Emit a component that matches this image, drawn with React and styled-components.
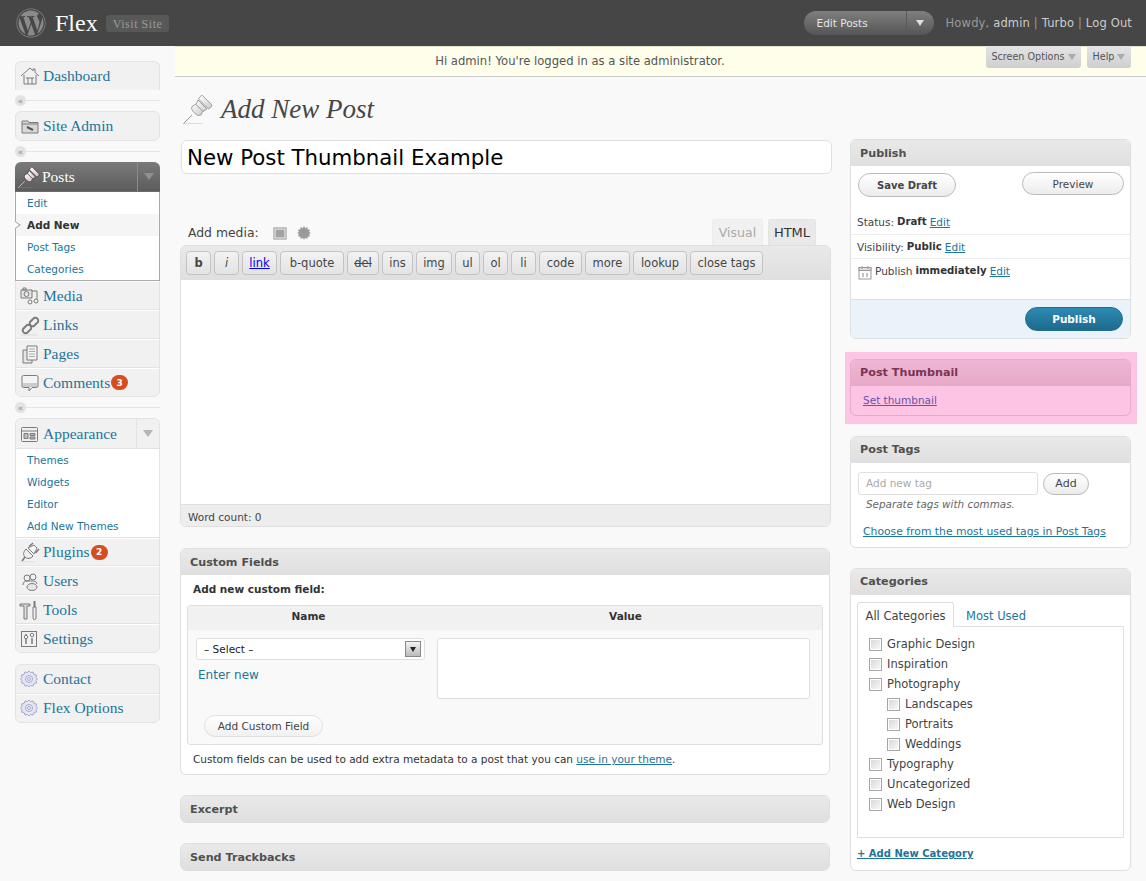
import React from 'react'
import styled, { createGlobalStyle } from 'styled-components'
import { FaWordpress } from 'react-icons/fa'

const sans = `"DejaVu Sans", Verdana, sans-serif`
const serif = `"Liberation Serif", Georgia, serif`

const GlobalStyle = createGlobalStyle`
  html, body {
    margin: 0;
    padding: 0;
    background: #f9f9f9;
    font-family: ${sans};
    font-size: 10.5px;
    color: #333;
  }
  * {
    box-sizing: border-box;
  }
`

/* header */

const TopBar = styled.header`
  display: flex;
  align-items: center;
  height: 46px;
  padding: 0 14px 0 16px;
  background: #464646;
`

const SiteName = styled.div`
  margin-left: 9px;
  font-family: ${serif};
  font-size: 24px;
  color: #fff;
`

const VisitSite = styled.a`
  display: block;
  margin-left: 8px;
  padding: 2px 7px;
  height: 17px;
  border-radius: 3px;
  background: #585858;
  font-family: ${serif};
  font-size: 12px;
  letter-spacing: 0.55px;
  color: #999;
`

const ActionPill = styled.div`
  display: flex;
  align-items: center;
  width: 130px;
  height: 24px;
  margin-left: auto;
  border-radius: 12px;
  background: linear-gradient(#7f7f7f, #555);
  color: #e6e6e6;
`

const ActionLabel = styled.span`
  flex: 1;
  padding-left: 13px;
`

const ActionArrow = styled.span`
  display: flex;
  align-items: center;
  justify-content: center;
  width: 28px;
  height: 100%;
  border-left: 1px solid #5a5a5a;
`

const Caret = styled.i`
  width: 0;
  height: 0;
  margin: ${props => props.$margin || '0'};
  border-left: ${props => props.$size || 4}px solid transparent;
  border-right: ${props => props.$size || 4}px solid transparent;
  border-top: ${props => (props.$size || 4) + 2}px solid ${props => props.$color || '#ddd'};
`

const Howdy = styled.div`
  margin-left: 12px;
  font-size: 11.5px;
  letter-spacing: 0.16px;
  color: #999;

  a {
    color: #ccc;
  }
`

/* sidebar */

const Layout = styled.div`
  display: flex;
`

const Sidebar = styled.nav`
  flex: none;
  width: 175px;
  padding: 15px 15px 0;
`

const MenuGroup = styled.div`
  border: 1px solid #e3e3e3;
  border-bottom-width: ${props => (props.$flat ? 0 : 1)}px;
  border-radius: ${props => (props.$flat ? '6px 6px 0 0' : '6px')};
  background: #f1f1f1;
`

const Separator = styled.div`
  display: flex;
  align-items: center;
  height: 21px;

  &::after {
    content: '';
    flex: 1;
    height: 1px;
    background: #e3e3e3;
  }
`

const GroupGap = styled.div`
  height: 11px;
`

const SeparatorDot = styled.span`
  display: flex;
  align-items: center;
  justify-content: center;
  width: 11px;
  height: 11px;
  border-radius: 50%;
  background: #e3e3e3;
  font-size: 9px;
  line-height: 10px;
  color: #8f8f8f;
`

const MenuRow = styled.div`
  display: flex;
  align-items: center;
  height: ${props => (props.$last || props.$short ? 28 : 29)}px;
  padding: ${props => (props.$lift ? '0 0 2px 3px' : '0 0 0 3px')};
  border-top: 1px solid ${props => (props.$first ? 'transparent' : '#fff')};
  border-bottom: ${props => (props.$last ? 0 : '1px solid #e3e3e3')};
`

const OpenHead = styled.div`
  display: flex;
  align-items: center;
  height: 30px;
  padding-left: 3px;
  margin: ${props => (props.$dark ? '-1px -1px 0' : '0')};
  border-radius: 6px 6px 0 0;
  background: ${props => (props.$dark ? 'linear-gradient(#7a7a7a, #5c5c5c)' : '#f1f1f1')};
  border-bottom: 1px solid ${props => (props.$dark ? '#6d6d6d' : '#e3e3e3')};
`

const HeadToggle = styled.span`
  display: flex;
  align-items: center;
  justify-content: center;
  width: 23px;
  height: 100%;
  margin-left: auto;
  border-left: 1px solid ${props => (props.$dark ? '#8c8c8c' : '#e3e3e3')};
`

const MenuIcon = styled.span`
  display: flex;
  flex: none;
  width: 22px;
  height: 22px;
  margin-right: 2px;
`

const MenuLabel = styled.a`
  font-family: ${serif};
  font-size: 15.5px;
  color: ${props => (props.$light ? '#fff' : '#21759b')};
`

const Badge = styled.span`
  display: flex;
  align-items: center;
  justify-content: center;
  width: 17px;
  height: 15px;
  margin-left: 1px;
  border-radius: 8px;
  background: #d54e21;
  font-size: 9px;
  font-weight: bold;
  color: #fff;
`

const SubMenu = styled.ul`
  margin: 0;
  padding: 0;
  list-style: none;
  background: #fff;
  border-bottom: 1px solid ${props => (props.$dark ? '#aaa' : '#e3e3e3')};
  ${props => props.$dark && 'margin: 0 -1px; border-left: 1px solid #aaa; border-right: 1px solid #aaa;'}
`

const SubItem = styled.li`
  position: relative;
  height: 22px;
  padding-left: 11px;
  line-height: 22px;
  color: ${props => (props.$current ? '#333' : '#21759b')};
  font-weight: ${props => (props.$current ? 'bold' : 'normal')};
  background: ${props => (props.$current ? '#f5f5f5' : '#fff')};

  ${props => props.$current && `
    &::before {
      content: '';
      position: absolute;
      left: -1px;
      top: 7px;
      width: 6px;
      height: 8px;
      background: #aaa;
      clip-path: polygon(0 0, 100% 50%, 0 100%);
    }
    &::after {
      content: '';
      position: absolute;
      left: -1px;
      top: 8px;
      width: 4px;
      height: 6px;
      background: #fff;
      clip-path: polygon(0 0, 100% 50%, 0 100%);
    }
  `}
`

/* main column */

const Main = styled.main`
  flex: 1;
  min-width: 0;
`

const Notice = styled.div`
  position: relative;
  height: 31px;
  padding-right: 161px;
  background: #fffeeb;
  border-top: 1px solid #e6e6d0;
  border-bottom: 1px solid #ccc;
  font-size: 11.6px;
  line-height: 29px;
  text-align: center;
  color: #555;
`

const ScreenTabs = styled.div`
  position: absolute;
  top: -1px;
  right: 15px;
  display: flex;
  gap: 6px;
`

const ScreenTab = styled.span`
  display: flex;
  align-items: center;
  justify-content: center;
  width: ${props => props.$width}px;
  height: 22px;
  border-radius: 0 0 3px 3px;
  background: linear-gradient(#e4e4e4, #cfcfcf);
  font-size: 9.6px;
  line-height: 22px;
  color: #555;
`

const Content = styled.div`
  padding: 0 15px 10px 6px;
`

const PageTitle = styled.div`
  display: flex;
  align-items: center;
  height: 63px;
  padding: 1px 0 0 2px;
`

const PageHeading = styled.h2`
  margin: 0 0 0 8px;
  font-family: ${serif};
  font-size: 27px;
  font-style: italic;
  font-weight: normal;
  color: #464646;
`

const Columns = styled.div`
  display: flex;
  gap: 18px;
  align-items: flex-start;
`

const LeftColumn = styled.div`
  flex: none;
  width: 651px;
`

const RightColumn = styled.aside`
  flex: none;
  width: 281px;
  margin-top: -1px;
`

const TitleInput = styled.input`
  display: block;
  width: 100%;
  height: 34px;
  padding: 1px 5px 0;
  border: 1px solid #dfdfdf;
  border-radius: 6px;
  background: #fff;
  font-family: ${sans};
  font-size: 21.3px;
  color: #000;
  outline: none;
`

const EditorHead = styled.div`
  display: flex;
  align-items: flex-end;
  height: 26px;
  margin-top: 45px;
  padding: 0 16px 0 7px;
`

const MediaLabel = styled.div`
  display: flex;
  align-items: center;
  height: 25px;
  font-size: 12.4px;
  color: #444;
`

const EditorTabs = styled.div`
  display: flex;
  gap: 5px;
  margin-left: auto;
`

const EditorTab = styled.span`
  width: ${props => props.$width}px;
  height: 26px;
  border: 1px solid ${props => (props.$active ? '#e4e4e4' : '#ececec')};
  border-bottom: 0;
  border-radius: 3px 3px 0 0;
  background: ${props => (props.$active ? '#e9e9e9' : '#f1f1f1')};
  font-size: ${props => (props.$active ? 13 : 12.5)}px;
  line-height: 25px;
  text-align: center;
  color: ${props => (props.$active ? '#333' : '#aaa')};
`

const Editor = styled.div`
  margin: 0 1px 0 -1px;
  border: 1px solid #dfdfdf;
  border-radius: 6px;
  overflow: hidden;
`

const Toolbar = styled.div`
  display: flex;
  gap: 3px;
  height: 34px;
  padding: 5px 0 0 5px;
  background: linear-gradient(#e9e9e9, #dfdfdf);
`

const TagButton = styled.button`
  width: ${props => props.$width}px;
  height: 24px;
  padding: 0;
  border: 1px solid #c3c3c3;
  border-radius: 4px;
  background: linear-gradient(#f2f2f2, #e3e3e3);
  font-family: ${sans};
  font-size: 11.5px;
  font-weight: ${props => (props.$bold ? 'bold' : 'normal')};
  font-style: ${props => (props.$italic ? 'italic' : 'normal')};
  text-decoration: ${props => props.$decoration || 'none'};
  color: ${props => props.$color || '#464646'};
`

const EditorArea = styled.div`
  height: 224px;
  background: #fff;
`

const WordCount = styled.div`
  height: 22px;
  padding-left: 7px;
  background: #ededed;
  border-top: 1px solid #dfdfdf;
  line-height: 24px;
  color: #444;
`

const Box = styled.section`
  margin-top: ${props => props.$top ?? 20}px;
  border: 1px solid ${props => (props.$pink ? '#e6abca' : '#dfdfdf')};
  border-radius: 6px;
  background: ${props => (props.$pink ? 'transparent' : '#fff')};
  overflow: hidden;
`

const WideBox = styled(Box)`
  width: 650px;
  margin-left: -1px;
`

const BoxHead = styled.h3`
  margin: 0;
  height: 26px;
  padding-left: 9px;
  background: ${props => (props.$pink
    ? 'linear-gradient(#eeb8d4, #e6a8c7)'
    : 'linear-gradient(#e9e9e9, #dfdfdf)')};
  font-size: 11.2px;
  font-weight: bold;
  line-height: ${props => (props.$tight ? 26 : 28)}px;
  color: ${props => (props.$pink ? '#7c3357' : '#505050')};
`

/* custom fields */

const FieldsBody = styled.div`
  padding: 0 6px;
`

const FieldsIntro = styled.div`
  padding: 8px 0 0 6px;
  height: 30px;
  font-weight: bold;
`

const FieldTable = styled.div`
  height: 140px;
  border: 1px solid #dfdfdf;
  border-radius: 3px;
  background: #f9f9f9;
`

const FieldHead = styled.div`
  display: grid;
  grid-template-columns: 241px 1fr;
  height: 24px;
  background: #f1f1f1;
  font-weight: bold;
  line-height: 20px;
  text-align: center;
`

const FieldInputs = styled.div`
  display: flex;
  padding: 8px 0 0 8px;
`

const FieldNameColumn = styled.div`
  width: 229px;
`

const SelectBox = styled.div`
  display: flex;
  align-items: center;
  justify-content: space-between;
  height: 22px;
  padding: 0 3px 0 7px;
  border: 1px solid #dfdfdf;
  border-radius: 3px;
  background: #fff;
  color: #222;
`

const SelectArrow = styled.span`
  display: flex;
  align-items: center;
  justify-content: center;
  width: 16px;
  height: 16px;
  border: 1px solid #888;
  background: linear-gradient(#f4f4f4, #bbb);
`

const EnterNew = styled.a`
  display: block;
  margin: 8px 0 0 2px;
  font-size: 12px;
  color: #21759b;
`

const ValueArea = styled.div`
  width: 373px;
  height: 61px;
  margin-left: 12px;
  border: 1px solid #dfdfdf;
  border-radius: 3px;
  background: #fff;
`

const PillButton = styled.button`
  display: block;
  width: ${props => props.$width}px;
  height: ${props => props.$height || 22}px;
  margin: ${props => props.$margin || '0'};
  padding: 0;
  border: 1px solid ${props => props.$border || '#bbb'};
  border-radius: 12px;
  background: ${props => props.$background || 'linear-gradient(#fff, #ececec)'};
  font-family: ${sans};
  font-size: ${props => props.$size || 10.5}px;
  font-weight: ${props => (props.$bold ? 'bold' : 'normal')};
  color: ${props => props.$color || '#464646'};
`

const FieldsNote = styled.div`
  height: 29px;
  padding: 8px 0 0 6px;
  color: #333;
`

const Link = styled.a`
  color: ${props => props.$color || '#21759b'};
  text-decoration: underline;
`

/* publish */

const PublishButtons = styled.div`
  display: flex;
  justify-content: space-between;
  align-items: flex-start;
  height: 45px;
  padding: 7px 6px 0 7px;
`

const MetaRow = styled.div`
  display: flex;
  align-items: ${props => (props.$plain ? 'flex-start' : 'center')};
  gap: 3px;
  height: ${props => (props.$plain ? 40 : 24)}px;
  padding: ${props => (props.$plain ? '6px 0 0 7px' : `0 0 ${props.$lift ? 2 : 0}px 6px`)};
  border-bottom: ${props => (props.$plain ? 0 : '1px solid #eee')};
  color: #444;

  b {
    font-size: 10.2px;
    color: #333;
  }
`

const PublishFooter = styled.div`
  display: flex;
  justify-content: flex-end;
  height: 39px;
  padding: 7px 7px 0 0;
  background: #eaf2fa;
  border-top: 1px solid #dfdfdf;
`

/* thumbnail highlight */

const Highlight = styled.div`
  margin: 13px -6px 0 -5px;
  padding: 7px 6px 8px 5px;
  background: #fec4e4;
`

const ThumbBody = styled.div`
  height: 29px;
  padding: 8px 0 0 12px;
`

/* tags */

const TagRow = styled.div`
  display: flex;
  align-items: center;
  gap: 5px;
  padding: 9px 0 0 7px;
`

const TagInput = styled.input`
  width: 180px;
  height: 23px;
  padding: 0 7px 2px;
  border: 1px solid #dfdfdf;
  border-radius: 3px;
  font-family: ${sans};
  font-size: 10.5px;
  outline: none;

  &::placeholder {
    color: #aaa;
    opacity: 1;
  }
`

const TagHint = styled.div`
  padding: 3px 0 0 15px;
  height: 27px;
  font-size: 10.4px;
  font-style: italic;
  color: #666;
`

const TagLink = styled.div`
  height: 25px;
  padding: 3px 0 0 12px;
  font-size: 10.8px;
`

/* categories */

const CategoryBody = styled.div`
  height: 275px;
  padding: 7px 6px 0;
`

const CategoryTabs = styled.div`
  display: flex;
  height: 25px;
`

const CategoryTab = styled.span`
  position: relative;
  z-index: 1;
  width: ${props => props.$width}px;
  height: ${props => (props.$active ? 25 : 24)}px;
  border: 1px solid ${props => (props.$active ? '#dfdfdf' : 'transparent')};
  border-bottom: 0;
  border-radius: 3px 3px 0 0;
  background: ${props => (props.$active ? '#fff' : 'transparent')};
  font-size: 11.5px;
  line-height: 27px;
  text-align: center;
  color: ${props => (props.$active ? '#444' : '#21759b')};
`

const CategoryPanel = styled.div`
  height: 212px;
  margin-top: -1px;
  padding: 7px 0 0 11px;
  border: 1px solid #dfdfdf;
`

const CategoryRow = styled.label`
  display: flex;
  align-items: center;
  gap: 5px;
  height: 20px;
  padding-left: ${props => (props.$nested ? 18 : 0)}px;
  font-size: 11.5px;
  color: #444;
`

const Checkbox = styled.input.attrs({ type: 'checkbox' })`
  appearance: none;
  flex: none;
  width: 13px;
  height: 13px;
  margin: 0;
  border: 1px solid #a6a6a6;
  background: linear-gradient(135deg, #d5d5d5, #fbfbfb);
  box-shadow: inset 0 0 0 1px #fff;
`

const AddCategory = styled.div`
  padding: 10px 0 0;
  font-size: 10px;
  font-weight: bold;
`

const ToolbarIconBox = styled.svg`
  margin: ${props => props.$margin};
`

/* icons */

const Icon = ({ children, size = 22 }) => (
  <svg width={size} height={size} viewBox="0 0 22 22" fill="none" stroke="#7b7b7b" strokeWidth="1">
    {children}
  </svg>
)

const HomeIcon = () => (
  <Icon>
    <path d="M2 11 11 3l3 2.700V4h2v3.500l4 3.500" />
    <path d="M5 10v9h12v-9" />
    <path d="M9 19v-6h4v6M7 13h2M13 13h2" />
  </Icon>
)

const FolderIcon = () => (
  <Icon>
    <path d="M3 6h6l1 1.500h9V18H3z" fill="#d8d8d8" />
    <path d="M3 9h16" />
    <path d="M8 12l6 3" stroke="#555" strokeWidth="2" />
  </Icon>
)

const PinIcon = ({ size = 22, light }) => {
  const line = light ? '#2e2424' : '#8a8a8a'
  const id = light ? 'pinLight' : 'pinDark'
  return (
    <svg width={size} height={size} viewBox="0 0 30 30" fill="none">
      <defs>
        <linearGradient id={id} x1="0" y1="0" x2="1" y2="1">
          <stop offset="0" stopColor="#fff" />
          <stop offset="1" stopColor={light ? '#d9bcbc' : '#c9c9c9'} />
        </linearGradient>
      </defs>
      <path d="M0 29.500h20" stroke={light ? '#777' : '#ddd'} />
      <path d="M0.500 29.500 9 21" stroke={light ? '#ddd' : '#9a9a9a'} />
      <path d="M13 10l7 7-2 4c-2 1-4 .5-6.500-2S8 14.500 9 12.500z" fill={`url(#${id})`} stroke={line} strokeWidth=".8" />
      <path d="M15 6l9 9-4 2.500-7-7z" fill={`url(#${id})`} stroke={line} strokeWidth=".8" />
      <path d="M19.500 1.500l9 9c.5 1 .2 2-.8 3l-2.200 1.500-10-10 1.500-2.200c1-1 1.700-1.500 2.500-1.300z" fill={`url(#${id})`} stroke={line} strokeWidth=".8" />
    </svg>
  )
}

const MediaIcon = () => (
  <Icon>
    <path d="M2 5h11v8H2z" fill="#e6e6e6" />
    <path d="M4 3h3v2H4z" />
    <circle cx="7.500" cy="9" r="2.500" />
    <path d="M13 6h5v8" />
    <circle cx="11" cy="17" r="2" />
    <circle cx="17" cy="16" r="2" />
  </Icon>
)

const LinkIcon = () => (
  <Icon>
    <g strokeWidth="2">
      <path d="M4 15l4-4a3 3 0 0 1 4 4l-4 4a3 3 0 0 1-4-4z" />
      <path d="M11 8l4-4a3 3 0 0 1 4 4l-4 4a3 3 0 0 1-4-4z" />
    </g>
    <path d="M2 21h16" stroke="#ddd" />
  </Icon>
)

const PagesIcon = () => (
  <Icon>
    <path d="M4 7h9v13H4z" fill="#e6e6e6" />
    <path d="M8 3h10v14H8z" fill="#f4f4f4" />
    <path d="M10 6h6M10 8.500h6M10 11h6M10 13.500h6" stroke="#aaa" />
  </Icon>
)

const CommentIcon = () => (
  <Icon>
    <path d="M3 5a1.500 1.500 0 0 1 1.500-1.500h13A1.500 1.500 0 0 1 19 5v9a1.500 1.500 0 0 1-1.500 1.500H13L10 19v-3.500H4.500A1.500 1.500 0 0 1 3 14z" fill="#f4f4f4" />
    <path d="M4 11h14v4H4z" fill="#ccc" stroke="none" />
  </Icon>
)

const AppearanceIcon = () => (
  <Icon>
    <rect x="2.500" y="4.500" width="16" height="14" rx="1" />
    <path d="M3 8h15" />
    <path d="M5 10.500h4v5H5zM11 10.500h5v2h-5zM11 14h5v2h-5z" fill="#bbb" />
  </Icon>
)

const PlugIcon = () => (
  <Icon>
    <path d="M7 8l7 7c-2 3-6 3-8 1s-2-5 1-8z" fill="#eee" />
    <path d="M10 5.500 14 2M16.500 12 20 8" strokeWidth="1.500" />
    <path d="M9 7l6-3 3 3-3 6z" fill="#f6f6f6" />
    <path d="M6 16l-3 4" strokeWidth="1.500" />
    <path d="M1 21h15" stroke="#ddd" />
  </Icon>
)

const UsersIcon = () => (
  <Icon>
    <circle cx="8" cy="8" r="3" fill="#f1f1f1" />
    <circle cx="14" cy="7" r="3" fill="#f1f1f1" />
    <path d="M4 15c0-3 2-4 4-4h6c3 0 4 2 4 3" />
    <ellipse cx="13" cy="17" rx="5" ry="3.500" fill="#e6e6e6" />
  </Icon>
)

const ToolsIcon = () => (
  <Icon>
    <path d="M1 5h10v2H8v13H5V7H1z" fill="#ddd" />
    <path d="M14 8h3v11a1.500 1.500 0 0 1-3 0z" fill="#eee" />
    <path d="M15.500 2v6" strokeWidth="2" />
  </Icon>
)

const SettingsIcon = () => (
  <Icon>
    <rect x="2.500" y="3.500" width="15" height="15" />
    <path d="M7 6v10M13 10v6" strokeWidth="1.500" />
    <circle cx="7" cy="9" r="1.700" fill="#fff" />
    <circle cx="13" cy="7" r="1.700" fill="#fff" />
  </Icon>
)

const GearIcon = () => (
  <svg width="22" height="22" viewBox="0 0 22 22" fill="none">
    <path
      d="M10 3l1.500 1.500L14 4l1 2.500 2.500.5-.5 2.500L18.500 11 17 12.500l.5 2.500-2.500.5-1 2.500-2.500-.5L10 19l-1.500-1.500L6 18l-1-2.500L2.500 15 3 12.500 1.500 11 3 9.500 2.500 7 5 6.500 6 4l2.500.5z"
      fill="#e4e6f4"
      stroke="#a3a8cc"
    />
    <circle cx="10" cy="11" r="3.500" stroke="#a3a8cc" fill="#f3f3fa" />
    <circle cx="10" cy="11" r="1.500" stroke="#a3a8cc" />
  </svg>
)

const MediaButton = () => (
  <ToolbarIconBox width="15" height="15" viewBox="0 0 15 15" $margin="1px 0 0 14px">
    <rect x="1" y="2" width="12" height="11" fill="#a3a3a3" stroke="#8e8e8e" />
    <rect x="2" y="3" width="10" height="9" fill="none" stroke="#f5f5f5" />
  </ToolbarIconBox>
)

const StarButton = () => (
  <ToolbarIconBox width="14" height="14" viewBox="0 0 14 14" $margin="1px 0 0 9px">
    <path
      d="M7 0l1.200 2.200L10.500 1l.2 2.500 2.500.2L12 6l2 1-2 1 1.200 2.300-2.500.2-.2 2.500-2.300-1.200L7 14l-1.200-2.200L3.500 13l-.2-2.500-2.500-.2L2 8 0 7l2-1L.8 3.700l2.500-.2L3.500 1l2.300 1.200z"
      fill="#9a9a9a"
    />
  </ToolbarIconBox>
)

const CalendarIcon = () => (
  <svg width="14" height="15" viewBox="0 0 14 15" fill="none" stroke="#999">
    <rect x="1" y="2.500" width="12" height="11.500" fill="#fff" />
    <path d="M1 2.500h12v3H1z" fill="#ddd" />
    <path d="M4 1v3M10 1v3" />
    <path d="M5 8v4M9 8v4" stroke="#888" />
  </svg>
)

const tagButtons = [
  { label: 'b', width: 25, $bold: true },
  { label: 'i', width: 25, $italic: true },
  { label: 'link', width: 35, $color: '#00e', $decoration: 'underline' },
  { label: 'b-quote', width: 64 },
  { label: 'del', width: 32, $decoration: 'line-through' },
  { label: 'ins', width: 31 },
  { label: 'img', width: 36 },
  { label: 'ul', width: 25 },
  { label: 'ol', width: 25 },
  { label: 'li', width: 25 },
  { label: 'code', width: 43 },
  { label: 'more', width: 45 },
  { label: 'lookup', width: 54 },
  { label: 'close tags', width: 73 },
]

const categories = [
  { name: 'Graphic Design' },
  { name: 'Inspiration' },
  { name: 'Photography' },
  { name: 'Landscapes', nested: true },
  { name: 'Portraits', nested: true },
  { name: 'Weddings', nested: true },
  { name: 'Typography' },
  { name: 'Uncategorized' },
  { name: 'Web Design' },
]

const Row = ({ icon, label, badge, ...rest }) => (
  <MenuRow {...rest}>
    <MenuIcon>{icon}</MenuIcon>
    <MenuLabel>{label}</MenuLabel>
    {badge && <Badge>{badge}</Badge>}
  </MenuRow>
)

const Sep = () => (
  <Separator>
    <SeparatorDot>«</SeparatorDot>
  </Separator>
)

export default function App() {
  return (
    <>
      <GlobalStyle />
      <TopBar>
        <FaWordpress size={30} color="#8a8a8a" />
        <SiteName>Flex</SiteName>
        <VisitSite>Visit Site</VisitSite>
        <ActionPill>
          <ActionLabel>Edit Posts</ActionLabel>
          <ActionArrow><Caret /></ActionArrow>
        </ActionPill>
        <Howdy>Howdy, <a>admin</a> | <a>Turbo</a> | <a>Log Out</a></Howdy>
      </TopBar>

      <Layout>
        <Sidebar>
          <MenuGroup $flat>
            <Row $first $lift $last icon={<HomeIcon />} label="Dashboard" />
          </MenuGroup>
          <Sep />
          <MenuGroup>
            <Row $first $lift $last icon={<FolderIcon />} label="Site Admin" />
          </MenuGroup>
          <Sep />
          <MenuGroup>
            <OpenHead $dark>
              <MenuIcon><PinIcon light /></MenuIcon>
              <MenuLabel $light>Posts</MenuLabel>
              <HeadToggle $dark><Caret $size={5} $color="#8f8f8f" /></HeadToggle>
            </OpenHead>
            <SubMenu $dark>
              <SubItem>Edit</SubItem>
              <SubItem $current>Add New</SubItem>
              <SubItem>Post Tags</SubItem>
              <SubItem>Categories</SubItem>
            </SubMenu>
            <Row icon={<MediaIcon />} label="Media" />
            <Row icon={<LinkIcon />} label="Links" />
            <Row icon={<PagesIcon />} label="Pages" />
            <Row $last icon={<CommentIcon />} label="Comments" badge="3" />
          </MenuGroup>
          <Sep />
          <MenuGroup>
            <OpenHead>
              <MenuIcon><AppearanceIcon /></MenuIcon>
              <MenuLabel>Appearance</MenuLabel>
              <HeadToggle><Caret $size={5} $color="#b5b5b5" /></HeadToggle>
            </OpenHead>
            <SubMenu>
              <SubItem>Themes</SubItem>
              <SubItem>Widgets</SubItem>
              <SubItem>Editor</SubItem>
              <SubItem>Add New Themes</SubItem>
            </SubMenu>
            <Row $short icon={<PlugIcon />} label="Plugins" badge="2" />
            <Row icon={<UsersIcon />} label="Users" />
            <Row icon={<ToolsIcon />} label="Tools" />
            <Row $last icon={<SettingsIcon />} label="Settings" />
          </MenuGroup>
          <GroupGap />
          <MenuGroup>
            <Row $first $lift icon={<GearIcon />} label="Contact" />
            <Row $last $lift icon={<GearIcon />} label="Flex Options" />
          </MenuGroup>
        </Sidebar>

        <Main>
          <Notice>
            Hi admin! You're logged in as a site administrator.
            <ScreenTabs>
              <ScreenTab $width={95}>Screen Options<Caret $margin="0 0 0 3px" $color="#aaa" /></ScreenTab>
              <ScreenTab $width={44}>Help<Caret $margin="0 0 0 3px" $color="#aaa" /></ScreenTab>
            </ScreenTabs>
          </Notice>

          <Content>
            <PageTitle>
              <PinIcon size={30} />
              <PageHeading>Add New Post</PageHeading>
            </PageTitle>

            <Columns>
              <LeftColumn>
                <TitleInput defaultValue="New Post Thumbnail Example" />

                <EditorHead>
                  <MediaLabel>Add media:<MediaButton /><StarButton /></MediaLabel>
                  <EditorTabs>
                    <EditorTab $width={51}>Visual</EditorTab>
                    <EditorTab $width={48} $active>HTML</EditorTab>
                  </EditorTabs>
                </EditorHead>

                <Editor>
                  <Toolbar>
                    {tagButtons.map(({ label, width, ...rest }) => (
                      <TagButton key={label} $width={width} {...rest}>{label}</TagButton>
                    ))}
                  </Toolbar>
                  <EditorArea />
                  <WordCount>Word count: 0</WordCount>
                </Editor>

                <WideBox $top={21}>
                  <BoxHead>Custom Fields</BoxHead>
                  <FieldsBody>
                    <FieldsIntro>Add new custom field:</FieldsIntro>
                    <FieldTable>
                      <FieldHead>
                        <span>Name</span>
                        <span>Value</span>
                      </FieldHead>
                      <FieldInputs>
                        <FieldNameColumn>
                          <SelectBox>
                            – Select –
                            <SelectArrow><Caret $size={3} $color="#222" /></SelectArrow>
                          </SelectBox>
                          <EnterNew>Enter new</EnterNew>
                        </FieldNameColumn>
                        <ValueArea />
                      </FieldInputs>
                      <PillButton $width={119} $margin="16px 0 0 16px" $background="linear-gradient(#fff, #f1f1f1)" $border="#dfdfdf">
                        Add Custom Field
                      </PillButton>
                    </FieldTable>
                    <FieldsNote>
                      Custom fields can be used to add extra metadata to a post that you can <Link>use in your theme</Link>.
                    </FieldsNote>
                  </FieldsBody>
                </WideBox>

                <WideBox>
                  <BoxHead>Excerpt</BoxHead>
                </WideBox>
                <WideBox>
                  <BoxHead>Send Trackbacks</BoxHead>
                </WideBox>
              </LeftColumn>

              <RightColumn>
                <Box $top={0}>
                  <BoxHead>Publish</BoxHead>
                  <PublishButtons>
                    <PillButton $width={98} $height={24} $size={10} $bold>Save Draft</PillButton>
                    <PillButton $width={102} $height={23} $margin="-1px 0 0">Preview</PillButton>
                  </PublishButtons>
                  <MetaRow $lift>Status: <b>Draft</b> <Link>Edit</Link></MetaRow>
                  <MetaRow>Visibility: <b>Public</b> <Link>Edit</Link></MetaRow>
                  <MetaRow $plain>
                    <CalendarIcon /> Publish <b>immediately</b> <Link>Edit</Link>
                  </MetaRow>
                  <PublishFooter>
                    <PillButton
                      $width={98}
                      $height={24}
                      $bold
                      $color="#fff"
                      $border="#1f6f91"
                      $background="linear-gradient(#2c8ab3, #1f6a8c)"
                    >
                      Publish
                    </PillButton>
                  </PublishFooter>
                </Box>

                <Highlight>
                  <Box $top={0} $pink>
                    <BoxHead $pink $tight>Post Thumbnail</BoxHead>
                    <ThumbBody><Link $color="#6a52a8">Set thumbnail</Link></ThumbBody>
                  </Box>
                </Highlight>

                <Box $top={12}>
                  <BoxHead $tight>Post Tags</BoxHead>
                  <TagRow>
                    <TagInput placeholder="Add new tag" />
                    <PillButton $width={46} $size={11}>Add</PillButton>
                  </TagRow>
                  <TagHint>Separate tags with commas.</TagHint>
                  <TagLink><Link>Choose from the most used tags in Post Tags</Link></TagLink>
                </Box>

                <Box>
                  <BoxHead $tight>Categories</BoxHead>
                  <CategoryBody>
                    <CategoryTabs>
                      <CategoryTab $width={97} $active>All Categories</CategoryTab>
                      <CategoryTab $width={84}>Most Used</CategoryTab>
                    </CategoryTabs>
                    <CategoryPanel>
                      {categories.map(item => (
                        <CategoryRow key={item.name} $nested={item.nested}>
                          <Checkbox />
                          {item.name}
                        </CategoryRow>
                      ))}
                    </CategoryPanel>
                    <AddCategory><Link>+ Add New Category</Link></AddCategory>
                  </CategoryBody>
                </Box>
              </RightColumn>
            </Columns>
          </Content>
        </Main>
      </Layout>
    </>
  )
}
